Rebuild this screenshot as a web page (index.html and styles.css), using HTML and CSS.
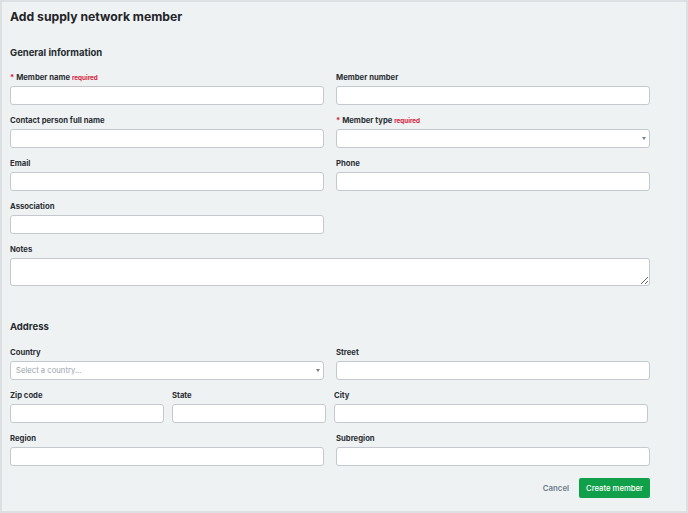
FILE: index.html
```html
<!DOCTYPE html>
<html lang="en">
<head>
<meta charset="utf-8">
<title>Add supply network member</title>
<link rel="stylesheet" href="styles.css">
</head>
<body>
<div class="page">
  <h1 class="title">Add supply network member</h1>
  <form class="form">
    <h2 class="section-title">General information</h2>
    <div class="grid-2">
      <div class="field">
        <label class="label"><span class="star">*</span> Member name <span class="req">required</span></label>
        <input class="input" type="text">
      </div>
      <div class="field">
        <label class="label">Member number</label>
        <input class="input" type="text">
      </div>
      <div class="field">
        <label class="label">Contact person full name</label>
        <input class="input" type="text">
      </div>
      <div class="field">
        <label class="label"><span class="star">*</span> Member type <span class="req">required</span></label>
        <div class="input select"><span class="caret"></span></div>
      </div>
      <div class="field">
        <label class="label">Email</label>
        <input class="input" type="text">
      </div>
      <div class="field">
        <label class="label">Phone</label>
        <input class="input" type="text">
      </div>
      <div class="field">
        <label class="label">Association</label>
        <input class="input" type="text">
      </div>
    </div>
    <div class="field">
      <label class="label">Notes</label>
      <textarea class="input textarea"></textarea>
    </div>

    <h2 class="section-title address-title">Address</h2>
    <div class="grid-2">
      <div class="field">
        <label class="label">Country</label>
        <div class="input select"><span class="placeholder">Select a country...</span><span class="caret"></span></div>
      </div>
      <div class="field">
        <label class="label">Street</label>
        <input class="input" type="text">
      </div>
    </div>
    <div class="grid-3">
      <div class="field">
        <label class="label">Zip code</label>
        <input class="input" type="text">
      </div>
      <div class="field">
        <label class="label">State</label>
        <input class="input" type="text">
      </div>
      <div class="field">
        <label class="label">City</label>
        <input class="input" type="text">
      </div>
    </div>
    <div class="grid-2">
      <div class="field">
        <label class="label">Region</label>
        <input class="input" type="text">
      </div>
      <div class="field">
        <label class="label">Subregion</label>
        <input class="input" type="text">
      </div>
    </div>
    <div class="actions">
      <button type="button" class="btn-cancel">Cancel</button>
      <button type="button" class="btn-primary">Create member</button>
    </div>
  </form>
</div>
</body>
</html>
```

FILE: styles.css
```css
* { box-sizing: border-box; }
html, body { margin: 0; padding: 0; }
body {
  font-family: Inter, "Noto Sans", "Liberation Sans", sans-serif;
  background: #eff2f3;
}
.page {
  width: 688px;
  height: 513px;
  border: 2px solid #dde0e3;
  background: #eff2f3;
  padding: 3px 0 0 8px;
  overflow: hidden;
}
.title {
  margin: 0;
  font-size: 12.2px;
  line-height: 24px;
  font-weight: 700;
  color: #1f2428;
}
.form {
  width: 640px;
  margin: 0;
}
.section-title {
  margin: 15px 0 9px;
  font-size: 9.5px;
  line-height: 18px;
  font-weight: 700;
  color: #262b30;
}
.address-title {
  margin-top: 32px;
  margin-bottom: 10px;
}
.grid-2 {
  display: grid;
  grid-template-columns: 314px 314px;
  column-gap: 12px;
}
.grid-3 {
  display: grid;
  grid-template-columns: 154px 154px 314px;
  column-gap: 8px;
}
.field {
  display: flex;
  flex-direction: column;
  margin-bottom: 9px;
}
.label {
  display: block;
  height: 14px;
  font-size: 7.7px;
  line-height: 14px;
  font-weight: 700;
  color: #2a2f34;
  margin-bottom: 1px;
  overflow: hidden;
  white-space: nowrap;
}
.star { color: #d7193a; }
.req {
  color: #d7193a;
  font-size: 6.3px;
  font-weight: 700;
  line-height: 1;
}
.input {
  display: block;
  width: 100%;
  height: 19px;
  margin: 0;
  padding: 0 3px 0 5px;
  border: 1px solid #c3c9ce;
  border-radius: 3px;
  background: #ffffff;
  font: inherit;
  outline: none;
}
.select {
  display: flex;
  align-items: center;
  justify-content: space-between;
}
.placeholder {
  font-size: 7.7px;
  color: #9ba4ac;
}
.caret {
  margin-left: auto;
  width: 0;
  height: 0;
  border-left: 2.5px solid transparent;
  border-right: 2.5px solid transparent;
  border-top: 3px solid #76808a;
}
.textarea {
  height: 28px;
  resize: vertical;
}
.actions {
  display: flex;
  justify-content: flex-end;
  align-items: center;
  gap: 10px;
  margin-top: 3px;
}
.btn-cancel {
  border: none;
  background: transparent;
  padding: 0;
  font: inherit;
  font-size: 7.8px;
  font-weight: 600;
  color: #6c7b8a;
}
.btn-primary {
  border: none;
  border-radius: 2px;
  background: #10a049;
  color: #ffffff;
  font: inherit;
  font-size: 7.7px;
  font-weight: 500;
  height: 20px;
  padding: 0 7px;
}
```
